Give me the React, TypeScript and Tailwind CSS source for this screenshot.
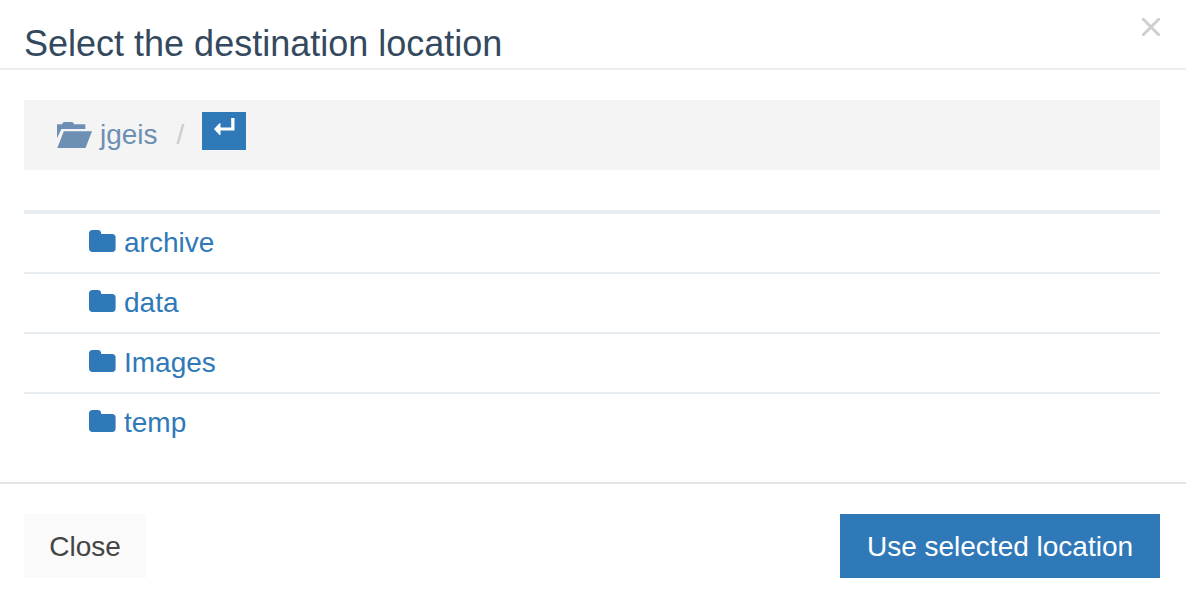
const folders = ["archive", "data", "Images", "temp"];

function FolderIcon() {
  return (
    <svg className="h-[22px] w-[27px] shrink-0" viewBox="0 0 27 22" fill="currentColor" aria-hidden="true">
      <path d="M3.4 0H9C10.9 0 12.2 1.3 12.2 3.2V4H23.3C25.2 4 26.6 5.3 26.6 7.2V18.8C26.6 20.7 25.2 22 23.3 22H3.4C1.5 22 0 20.7 0 18.8V3.2C0 1.3 1.5 0 3.4 0Z" />
    </svg>
  );
}

function FolderOpenIcon() {
  return (
    <svg className="h-[26px] w-[35px] shrink-0" viewBox="0 0 35 26" fill="currentColor" aria-hidden="true">
      <path d="M0 2.3H5.2C5.5 .9 6.3 0 7.8 0H14.4C15.900 0 16.700 .9 17 2.3H28.3V7H4.400L0 16.200Z" />
      <path d="M6.8 9.300H35L28.500 26H.3Z" />
    </svg>
  );
}

function ReturnIcon() {
  return (
    <svg className="h-[17px] w-[21px]" viewBox="0 0 21 17" fill="currentColor" aria-hidden="true">
      <path d="M17.200 0H20.500V12.500H6.500V17H5.500L0 11L5.500 5.300H6.500V9.500H17.200Z" />
    </svg>
  );
}

export default function App() {
  return (
    <main className="min-h-screen bg-white font-['Liberation_Sans',Arial,sans-serif] text-[28px] leading-10">
      <header className="flex items-start justify-between border-b-2 border-[#ededed] pr-[26px] pl-6">
        <h1 className="pt-5 text-4xl leading-12 font-light text-[#34495e]">Select the destination location</h1>
        <button type="button" aria-label="Close dialog" className="pt-[18px] text-[#cfcfcf]">
          <svg className="size-[18px]" viewBox="0 0 18 18" stroke="currentColor" strokeWidth="3" aria-hidden="true">
            <path d="M0 0L18 18M18 0L0 18" />
          </svg>
        </button>
      </header>

      <section className="pt-[30px] pr-[26px] pb-[30px] pl-6">
        <nav aria-label="Current location" className="flex items-start bg-[#f4f4f4] py-3 pr-8 pl-[33px]">
          <a href="#jgeis" className="flex h-[46px] items-center gap-2 text-[#6d8fb3]">
            <FolderOpenIcon />
            <span>jgeis</span>
          </a>
          <span className="ml-[19px] leading-[46px] text-[#cccccc]">/</span>
          <button type="button" aria-label="Go up one folder" className="ml-[18px] flex h-[38px] w-11 justify-center bg-[#2f79b9] pt-1.5 text-white">
            <ReturnIcon />
          </button>
        </nav>

        <ul className="mt-10 divide-y-2 divide-[#e7ecf1] border-t-4 border-[#e7ecf1]">
          {folders.map((name) => (
            <li key={name} className="px-[65px] py-[9px]">
              <a href={`#${name}`} className="inline-flex items-start gap-2 align-top text-[#2f79b9]">
                <span className="pt-[7px]">
                  <FolderIcon />
                </span>
                <span>{name}</span>
              </a>
            </li>
          ))}
        </ul>
      </section>

      <footer className="flex items-center justify-between border-t-2 border-[#e5e5e5] pt-[30px] pr-[26px] pb-[22px] pl-6">
        <button type="button" className="min-w-[122px] bg-[#fafafa] px-6 pt-[13px] pb-[11px] text-[#444444]">Close</button>
        <button type="button" className="min-w-[320px] bg-[#2f79b9] px-6 pt-[13px] pb-[11px] text-white">Use selected location</button>
      </footer>
    </main>
  );
}
